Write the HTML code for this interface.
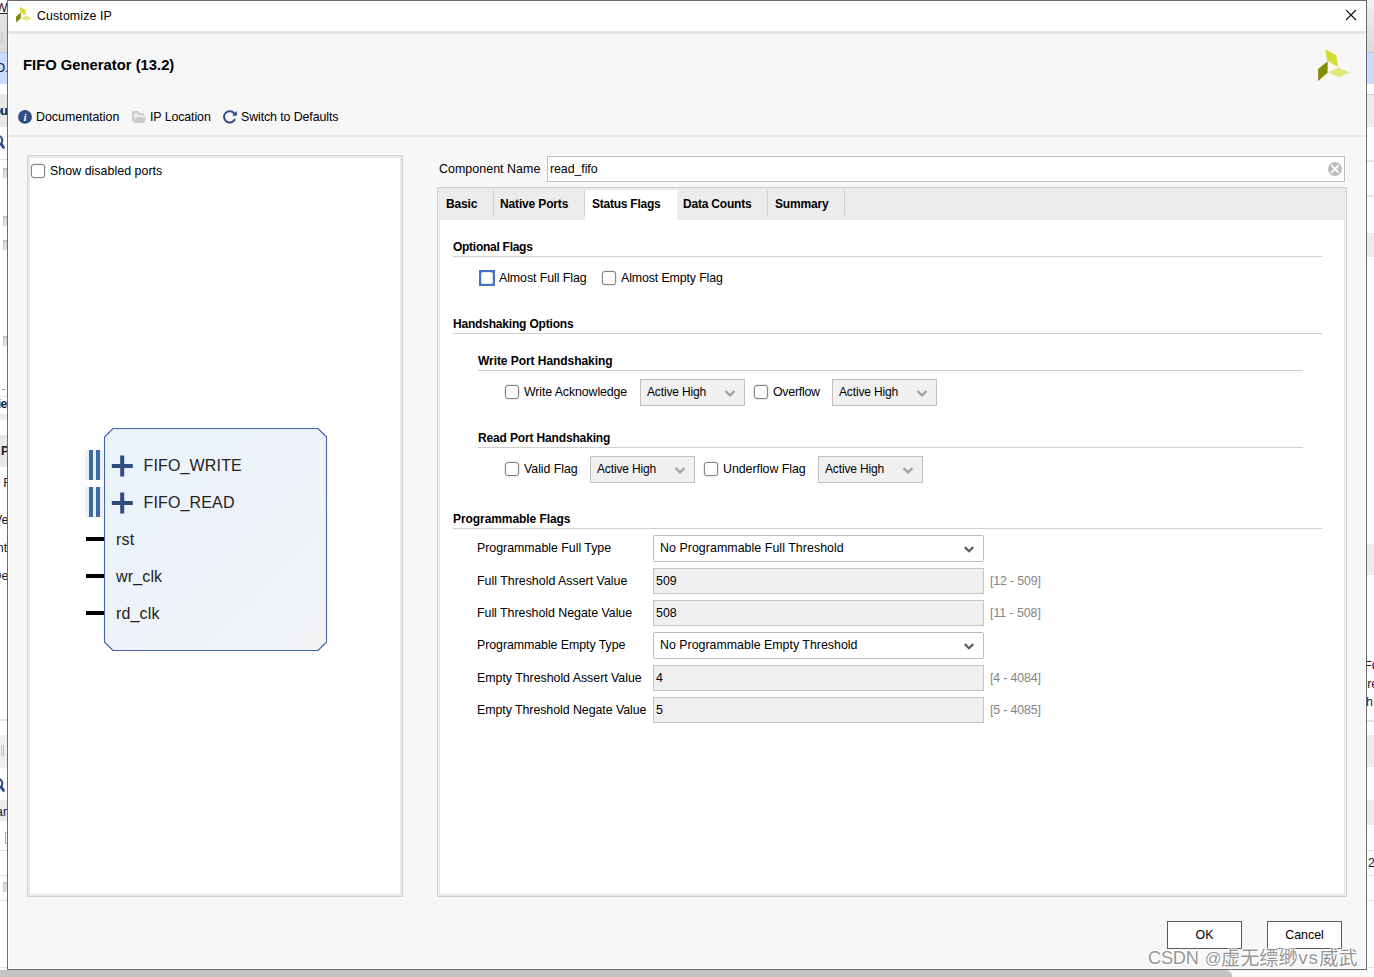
<!DOCTYPE html>
<html>
<head>
<meta charset="utf-8">
<title>Customize IP</title>
<style>
html,body{margin:0;padding:0;}
body{width:1374px;height:977px;position:relative;overflow:hidden;background:#fff;font-family:"Liberation Sans",sans-serif;font-size:12.4px;color:#000;}
.abs{position:absolute;}
.t{position:absolute;white-space:nowrap;line-height:16px;height:16px;}
.b{font-weight:700;font-size:12px;letter-spacing:-0.15px;}
#dlg{position:absolute;left:7px;top:0;width:1358px;height:968px;border:1px solid #6a6a6a;box-shadow:inset 0 0 0 1px #fff;background:#f7f7f7;box-sizing:content-box;}
.cb{position:absolute;width:12px;height:12px;border:1px solid #858585;border-radius:3px;background:#fff;box-shadow:0 0 0 0.5px rgba(133,133,133,.35);}
.cbf{position:absolute;width:16px;height:16px;background:#4472c8;}
.cbf i{position:absolute;left:2px;top:2px;width:12px;height:12px;border-radius:2.5px;background:#fff;box-shadow:inset 0 0 0 0.6px #d8d2cc;}
.hl{position:absolute;height:1px;background:#cfcfcf;}
.sel{position:absolute;height:25px;border:1px solid #c0c0c0;background:#f0f0f0;}
.selw{position:absolute;height:25px;border:1px solid #bcbcbc;border-radius:1.5px;background:#fff;}
.inp{position:absolute;height:24px;border:1px solid #c4c4c4;background:#efefef;}
.rng{color:#858585;}
.btn{position:absolute;height:26px;border:1px solid #5c5c5c;background:#fff;text-align:center;line-height:26px;}
</style>
</head>
<body>
<!-- background app strips -->
<div id="bgl" class="abs" style="left:0;top:0;width:7px;height:977px;background:#fff;overflow:hidden;font-size:12.4px;color:#1a1a2a;">
<div class="abs" style="left:0;top:14px;width:8px;height:39px;background:linear-gradient(#e2e2e2,#dadada);"></div><div class="abs" style="left:1px;top:33px;width:2px;height:10px;background:#cfcfcf;"></div><div class="abs" style="left:0;top:52px;width:8px;height:1px;background:#c6c6c6;"></div><div class="abs" style="left:0;top:53px;width:8px;height:31px;background:#c9dcff;"></div><div class="abs" style="left:0;top:94px;width:8px;height:33px;background:#e8e8e8;"></div><div class="abs" style="left:0;top:159px;width:8px;height:1px;background:#e4e4e4;"></div><div class="abs" style="left:0;top:396px;width:8px;height:1px;background:#e2e2e2;"></div><div class="abs" style="left:2px;top:389px;width:3px;height:1px;background:#999;"></div><div class="abs" style="left:0;top:414px;width:8px;height:6px;background:#eeeeee;"></div><div class="abs" style="left:0;top:435px;width:8px;height:32px;background:#e8e8e8;"></div><div class="abs" style="left:0;top:719px;width:8px;height:2px;background:#e8e8e8;"></div><div class="abs" style="left:0;top:735px;width:8px;height:33px;background:#efefef;"></div><div class="abs" style="left:0;top:800px;width:8px;height:21px;background:#ececec;"></div><div class="abs" style="left:0;top:850px;width:8px;height:1px;background:#e4e4e4;"></div><div class="abs" style="left:0;top:875px;width:8px;height:1px;background:#e4e4e4;"></div><div class="abs" style="left:0;top:900px;width:8px;height:1px;background:#e4e4e4;"></div>
<div class="abs" style="left:0;top:967px;width:8px;height:1px;background:#e6e6e6;"></div><div class="t" style="left:-4.2px;top:0px;color:#101030;">W</div><div class="abs" style="left:0;top:13px;width:8px;height:1px;background:#222;"></div><div class="t" style="left:-4.6px;top:60.4px;color:#151530;">O.</div><div class="t" style="left:-6.6px;top:102.6px;font-weight:700;letter-spacing:-0.8px;">ou</div><div class="t" style="left:-2.2px;top:396px;font-weight:700;letter-spacing:-0.8px;">ie</div><div class="t" style="left:1px;top:442.7px;font-weight:700;">P</div><div class="t" style="left:3.2px;top:474.6px;">F</div><div class="t" style="left:-6px;top:512px;">Ve</div><div class="t" style="left:-3.2px;top:540px;">nt</div><div class="t" style="left:-7.5px;top:568px;">De</div><div class="t" style="left:-4px;top:804px;">ar</div><svg class="abs" style="left:-10px;top:132px;" width="18" height="20" viewBox="0 0 18 20"><circle cx="7.7" cy="8.5" r="4.6" fill="none" stroke="#2e4c8c" stroke-width="2.1"/><path d="M11.1 12 L13.5 15.4" stroke="#2e4c8c" stroke-width="2.8" stroke-linecap="round"/></svg><svg class="abs" style="left:-10px;top:775px;" width="18" height="20" viewBox="0 0 18 20"><circle cx="7.7" cy="8.5" r="4.6" fill="none" stroke="#2e4c8c" stroke-width="2.1"/><path d="M11.1 12 L13.5 15.4" stroke="#2e4c8c" stroke-width="2.8" stroke-linecap="round"/></svg><div class="abs" style="left:3px;top:168px;width:6px;height:8px;background:#dedede;border-top:2px solid #c4c4c4;border-left:1px solid #c8c8c8;"></div><div class="abs" style="left:3px;top:216px;width:6px;height:8px;background:#dedede;border-top:2px solid #c4c4c4;border-left:1px solid #c8c8c8;"></div><div class="abs" style="left:3px;top:240px;width:6px;height:8px;background:#dedede;border-top:2px solid #c4c4c4;border-left:1px solid #c8c8c8;"></div><div class="abs" style="left:3px;top:336px;width:6px;height:8px;background:#dedede;border-top:2px solid #c4c4c4;border-left:1px solid #c8c8c8;"></div><div class="abs" style="left:3px;top:882px;width:6px;height:8px;background:#dedede;border-top:2px solid #c4c4c4;border-left:1px solid #c8c8c8;"></div><div class="abs" style="left:5px;top:832px;width:4px;height:10px;border:1px solid #aaa;"></div><div class="abs" style="left:1px;top:745px;width:1px;height:11px;background:#ecc79a;"></div><div class="abs" style="left:3px;top:745px;width:1px;height:11px;background:#a9bbd8;"></div>
</div>
<div id="bgr" class="abs" style="left:1367px;top:0;width:7px;height:977px;background:#fff;overflow:hidden;font-size:12.4px;color:#1a1a2a;">
<div class="abs" style="left:0;top:0;width:8px;height:53px;background:linear-gradient(#f0f0f0,#d9d9d9);"></div><div class="abs" style="left:0;top:52px;width:8px;height:1px;background:#c6c6c6;"></div><div class="abs" style="left:0;top:53px;width:8px;height:31px;background:#c9dcff;"></div><div class="abs" style="left:0;top:94px;width:8px;height:1px;background:#d0d0d0;"></div><div class="abs" style="left:0;top:95px;width:8px;height:32px;background:#ececec;"></div><div class="abs" style="left:0;top:160px;width:8px;height:2px;background:#e6e6e6;"></div><div class="abs" style="left:0;top:195px;width:8px;height:2px;background:#e6e6e6;"></div><div class="abs" style="left:0;top:233px;width:8px;height:24px;background:#ececec;"></div><div class="abs" style="left:0;top:544px;width:8px;height:31px;background:#ececec;"></div><div class="abs" style="left:0;top:720px;width:8px;height:2px;background:#e2e2e2;"></div><div class="abs" style="left:0;top:735px;width:8px;height:32px;background:#ececec;"></div><div class="abs" style="left:0;top:800px;width:8px;height:25px;background:#ececec;"></div><div class="abs" style="left:0;top:850px;width:8px;height:1px;background:#e0e0e0;"></div><div class="abs" style="left:0;top:875px;width:8px;height:1px;background:#e0e0e0;"></div><div class="abs" style="left:0;top:900px;width:8px;height:1px;background:#e0e0e0;"></div>
<div class="abs" style="left:0;top:967px;width:8px;height:1px;background:#e2e2e2;"></div><div class="t" style="left:-2.8px;top:658px;">FC</div><div class="t" style="left:-2.6px;top:676px;">ire</div><div class="t" style="left:-1.1px;top:694px;">h</div><div class="t" style="left:1px;top:855px;">2</div>
</div>
<div class="abs" style="left:0;top:970px;width:1374px;height:7px;background:#fafafa;"></div><div class="abs" style="left:-10px;top:970px;width:1242px;height:12px;border-radius:6px;background:#c3c3c3;"></div>
<div id="dlg"></div>

<!-- title bar -->
<div class="abs" style="left:8px;top:1px;width:1358px;height:30px;background:#fff;"></div>
<div class="abs" style="left:8px;top:31px;width:1358px;height:3px;background:#e6e6e6;"></div>
<svg class="abs" style="left:13.6px;top:5.4px;" width="19" height="19" viewBox="0 0 38 38">
  <polygon points="11.5,3.2 22.5,9.4 24.0,20.9 13.0,14.5" fill="#d2dd35"/>
  <polygon points="4.1,22.9 13.6,15.2 13.6,26.8 4.1,35.0" fill="#858a08"/>
  <polygon points="14.1,26.3 24.8,21.6 35.6,26.5 24.8,31.6" fill="#e1e97a"/>
</svg>
<div class="t" style="left:37px;top:8px;font-size:12.4px;color:#000;letter-spacing:0.1px;">Customize IP</div>
<svg class="abs" style="left:1344px;top:8px;" width="14" height="14" viewBox="0 0 14 14"><path d="M2 2 L12 12 M12 2 L2 12" stroke="#111" stroke-width="1.1" fill="none"/></svg>

<!-- header -->
<div class="t" style="left:23px;top:56px;font-weight:700;font-size:14.8px;line-height:18px;height:18px;color:#000;">FIFO Generator (13.2)</div>
<svg class="abs" style="left:1314px;top:46px;" width="38" height="38" viewBox="0 0 38 38">
  <polygon points="11.5,3.2 22.5,9.4 24.0,20.9 13.0,14.5" fill="#d2dd35"/>
  <polygon points="4.1,22.9 13.6,15.2 13.6,26.8 4.1,35.0" fill="#858a08"/>
  <polygon points="14.1,26.3 24.8,21.6 35.6,26.5 24.8,31.6" fill="#e1e97a"/>
</svg>

<!-- toolbar -->
<svg class="abs" style="left:17px;top:110px;" width="16" height="14" viewBox="0 0 16 14">
  <circle cx="8" cy="6.9" r="6.95" fill="#314e87"/>
  <text x="8.1" y="11.4" font-family="Liberation Serif, serif" font-size="11" font-weight="700" font-style="italic" fill="#fff" text-anchor="middle">i</text>
</svg>
<div class="t" style="left:36px;top:109px;">Documentation</div>
<svg class="abs" style="left:131px;top:110px;" width="16" height="14" viewBox="0 0 16 14">
  <path d="M2 11.6 V3.1 Q2 2.05 3.1 2.05 H6.4 Q7.2 2.05 7.4 3 L7.6 4 H11.4 Q12.3 4 12.3 4.9 V5.9" stroke="#cbcbcb" stroke-width="2" fill="#ededed" stroke-linejoin="round"/>
  <polygon points="4.3,7.2 15,7.2 13.4,12.9 3,12.9" fill="#cacaca"/>
</svg>
<div class="t" style="left:150px;top:109px;letter-spacing:-0.1px;">IP Location</div>
<svg class="abs" style="left:221px;top:109px;" width="18" height="16" viewBox="0 0 18 16">
  <path d="M13.4 4.6 A5.7 5.7 0 1 0 14.0 10.0" fill="none" stroke="#2f4d88" stroke-width="2"/>
  <polygon points="15.9,2.0 15.9,6.7 11.0,6.6" fill="#2f4d88"/>
</svg>
<div class="t" style="left:241px;top:109px;letter-spacing:-0.1px;">Switch to Defaults</div>
<div class="abs" style="left:8px;top:135px;width:1358px;height:2px;background:#e9e9e9;"></div>

<!-- left panel -->
<div class="abs" style="left:27px;top:155px;width:374px;height:740px;border:1px solid #d2d2d2;background:#e9e9e9;"></div>
<div class="abs" style="left:30px;top:158px;width:370px;height:736px;background:#fff;"></div>
<div class="cb" style="left:31px;top:164px;"></div>
<div class="t" style="left:50px;top:163px;letter-spacing:0.04px;">Show disabled ports</div>

<!-- block symbol -->
<svg class="abs" style="left:80px;top:420px;" width="260" height="240" viewBox="0 0 260 240">
  <defs><linearGradient id="bg1" x1="0" y1="0" x2="1" y2="1"><stop offset="0" stop-color="#eaf2fc"/><stop offset="0.85" stop-color="#f1f4f8"/><stop offset="1" stop-color="#f5f5f6"/></linearGradient></defs>
  <path d="M33 8.5 H238 L246.5 17 V222 L238 230.5 H33 L24.5 222 V17 Z" fill="url(#bg1)" stroke="#4566ae" stroke-width="1.1" stroke-linejoin="round"/>
  <rect x="5" y="30" width="18" height="30" fill="#eaf1fb"/>
  <rect x="9" y="30" width="4" height="30" fill="#3d6a9e"/>
  <rect x="16" y="30" width="4" height="30" fill="#3d6a9e"/>
  <rect x="5" y="67" width="18" height="30" fill="#eaf1fb"/>
  <rect x="9" y="67" width="4" height="30" fill="#3d6a9e"/>
  <rect x="16" y="67" width="4" height="30" fill="#3d6a9e"/>
  <path d="M31.8 46 h21 M42.2 35.5 v21" stroke="#2f4b80" stroke-width="4" fill="none"/>
  <path d="M31.8 83 h21 M42.2 72.5 v21" stroke="#2f4b80" stroke-width="4" fill="none"/>
  <rect x="6" y="117" width="18" height="4" fill="#000"/>
  <rect x="6" y="154" width="18" height="4" fill="#000"/>
  <rect x="6" y="191" width="18" height="4" fill="#000"/>
  <g font-family="Liberation Sans, sans-serif" font-size="16" letter-spacing="0.15" fill="#222">
    <text x="63.5" y="51">FIFO_WRITE</text>
    <text x="63.5" y="88">FIFO_READ</text>
    <text x="36" y="125">rst</text>
    <text x="36" y="162">wr_clk</text>
    <text x="36" y="199">rd_clk</text>
  </g>
</svg>

<!-- component name -->
<div class="t" style="left:439px;top:161px;letter-spacing:0.06px;">Component Name</div>
<div class="abs" style="left:547px;top:156px;width:796px;height:24px;border:1px solid #bdbdbd;background:#fff;box-shadow:0 0 0 1px #fdfdfd;"></div>
<div class="t" style="left:550px;top:161px;letter-spacing:-0.08px;">read_fifo</div>
<svg class="abs" style="left:1327px;top:161px;" width="16" height="16" viewBox="0 0 16 16"><circle cx="8" cy="8" r="7" fill="#bdbdbd"/><path d="M4.2 4.2 L11.8 11.8 M11.8 4.2 L4.2 11.8" stroke="#fff" stroke-width="1.8" fill="none"/></svg>

<!-- tab panel -->
<div class="abs" style="left:437px;top:187px;width:908px;height:708px;border:1px solid #cfcfcf;background:#e9e9e9;"></div>
<div class="abs" style="left:440px;top:190px;width:904px;height:704px;background:#fff;"></div>
<div class="abs" style="left:440px;top:190px;width:904px;height:30px;background:#ececec;"></div>
<div class="abs" style="left:585px;top:190px;width:92px;height:30px;background:#fff;"></div>
<div class="abs" style="left:493px;top:190px;width:1px;height:25px;background:#cfcfcf;"></div>
<div class="abs" style="left:584px;top:190px;width:1px;height:25px;background:#cfcfcf;"></div>
<div class="abs" style="left:767px;top:190px;width:1px;height:25px;background:#cfcfcf;"></div>
<div class="abs" style="left:844px;top:190px;width:1px;height:25px;background:#cfcfcf;"></div>
<div class="t b" style="left:446px;top:196px;">Basic</div>
<div class="t b" style="left:500px;top:196px;">Native Ports</div>
<div class="t b" style="left:592px;top:196px;letter-spacing:-0.24px;">Status Flags</div>
<div class="t b" style="left:683px;top:196px;letter-spacing:-0.2px;">Data Counts</div>
<div class="t b" style="left:775px;top:196px;">Summary</div>

<!-- optional flags -->
<div class="t b" style="left:453px;top:239px;letter-spacing:-0.27px;">Optional Flags</div>
<div class="hl" style="left:453px;top:256px;width:869px;"></div>
<div class="cbf" style="left:479px;top:270px;"><i></i></div>
<div class="t" style="left:499px;top:270px;letter-spacing:-0.08px;">Almost Full Flag</div>
<div class="cb" style="left:602px;top:271px;"></div>
<div class="t" style="left:621px;top:270px;letter-spacing:-0.13px;">Almost Empty Flag</div>

<!-- handshaking -->
<div class="t b" style="left:453px;top:316px;letter-spacing:-0.19px;">Handshaking Options</div>
<div class="hl" style="left:453px;top:333px;width:869px;"></div>
<div class="t b" style="left:478px;top:353px;letter-spacing:-0.06px;">Write Port Handshaking</div>
<div class="hl" style="left:478px;top:370px;width:825px;"></div>
<div class="cb" style="left:505px;top:385px;"></div>
<div class="t" style="left:524px;top:384px;letter-spacing:-0.12px;">Write Acknowledge</div>
<div class="sel" style="left:640px;top:379px;width:103px;"></div><div class="t" style="left:647px;top:384px;font-size:12px;letter-spacing:-0.15px;">Active High</div><svg class="abs" style="left:724px;top:389px;" width="13" height="8" viewBox="0 0 13 8"><path d="M1.5 2 L6 6.3 L10.5 2" fill="none" stroke="#a2a2a2" stroke-width="2.4"/></svg>
<div class="cb" style="left:754px;top:385px;"></div>
<div class="t" style="left:773px;top:384px;letter-spacing:-0.27px;">Overflow</div>
<div class="sel" style="left:832px;top:379px;width:103px;"></div><div class="t" style="left:839px;top:384px;font-size:12px;letter-spacing:-0.15px;">Active High</div><svg class="abs" style="left:916px;top:389px;" width="13" height="8" viewBox="0 0 13 8"><path d="M1.5 2 L6 6.3 L10.5 2" fill="none" stroke="#a2a2a2" stroke-width="2.4"/></svg>

<div class="t b" style="left:478px;top:430px;">Read Port Handshaking</div>
<div class="hl" style="left:478px;top:447px;width:825px;"></div>
<div class="cb" style="left:505px;top:462px;"></div>
<div class="t" style="left:524px;top:461px;letter-spacing:-0.05px;">Valid Flag</div>
<div class="sel" style="left:590px;top:456px;width:103px;"></div><div class="t" style="left:597px;top:461px;font-size:12px;letter-spacing:-0.15px;">Active High</div><svg class="abs" style="left:674px;top:466px;" width="13" height="8" viewBox="0 0 13 8"><path d="M1.5 2 L6 6.3 L10.5 2" fill="none" stroke="#a2a2a2" stroke-width="2.4"/></svg>
<div class="cb" style="left:704px;top:462px;"></div>
<div class="t" style="left:723px;top:461px;letter-spacing:-0.05px;">Underflow Flag</div>
<div class="sel" style="left:818px;top:456px;width:103px;"></div><div class="t" style="left:825px;top:461px;font-size:12px;letter-spacing:-0.15px;">Active High</div><svg class="abs" style="left:902px;top:466px;" width="13" height="8" viewBox="0 0 13 8"><path d="M1.5 2 L6 6.3 L10.5 2" fill="none" stroke="#a2a2a2" stroke-width="2.4"/></svg>

<!-- programmable flags -->
<div class="t b" style="left:453px;top:511px;letter-spacing:-0.07px;">Programmable Flags</div>
<div class="hl" style="left:453px;top:528px;width:869px;"></div>
<div class="t" style="left:477px;top:540px;letter-spacing:-0.03px;">Programmable Full Type</div>
<div class="selw" style="left:653px;top:535px;width:329px;"></div><div class="t" style="left:660px;top:540px;letter-spacing:0.05px;">No Programmable Full Threshold</div><svg class="abs" style="left:963px;top:545px;" width="12" height="8" viewBox="0 0 12 8"><path d="M1.8 2.1 L6 6.3 L10.2 2.1" fill="none" stroke="#5e5e5e" stroke-width="2.2"/></svg>
<div class="t" style="left:477px;top:573px;">Full Threshold Assert Value</div>
<div class="inp" style="left:653px;top:568px;width:329px;"></div><div class="t" style="left:656px;top:573px;">509</div><div class="t rng" style="left:990px;top:573px;letter-spacing:-0.16px;">[12 - 509]</div>
<div class="t" style="left:477px;top:605px;letter-spacing:-0.03px;">Full Threshold Negate Value</div>
<div class="inp" style="left:653px;top:600px;width:329px;"></div><div class="t" style="left:656px;top:605px;">508</div><div class="t rng" style="left:990px;top:605px;letter-spacing:-0.06px;">[11 - 508]</div>
<div class="t" style="left:477px;top:637px;letter-spacing:-0.07px;">Programmable Empty Type</div>
<div class="selw" style="left:653px;top:632px;width:329px;"></div><div class="t" style="left:660px;top:637px;">No Programmable Empty Threshold</div><svg class="abs" style="left:963px;top:642px;" width="12" height="8" viewBox="0 0 12 8"><path d="M1.8 2.1 L6 6.3 L10.2 2.1" fill="none" stroke="#5e5e5e" stroke-width="2.2"/></svg>
<div class="t" style="left:477px;top:670px;letter-spacing:-0.03px;">Empty Threshold Assert Value</div>
<div class="inp" style="left:653px;top:665px;width:329px;"></div><div class="t" style="left:656px;top:670px;">4</div><div class="t rng" style="left:990px;top:670px;letter-spacing:-0.16px;">[4 - 4084]</div>
<div class="t" style="left:477px;top:702px;letter-spacing:-0.06px;">Empty Threshold Negate Value</div>
<div class="inp" style="left:653px;top:697px;width:329px;"></div><div class="t" style="left:656px;top:702px;">5</div><div class="t rng" style="left:990px;top:702px;letter-spacing:-0.16px;">[5 - 4085]</div>

<!-- buttons -->
<div class="btn" style="left:1167px;top:921px;width:73px;">OK</div>
<div class="btn" style="left:1267px;top:921px;width:73px;">Cancel</div>

<!-- watermark -->
<div id="wm" class="t" style="left:1148px;top:945.3px;height:26px;line-height:26px;font-size:18.2px;font-family:'Liberation Sans','Noto Sans CJK SC',sans-serif;color:rgba(122,122,122,0.8);text-shadow:-1px -1px 0 rgba(255,255,255,.8),1px -1px 0 rgba(255,255,255,.8),-1px 1px 0 rgba(255,255,255,.8),1px 1px 0 rgba(255,255,255,.8);"><span style="letter-spacing:-0.2px;">CSDN</span> <span style="font-size:16.6px;letter-spacing:-0.6px;margin-left:1px;">@</span><span style="font-size:19.15px;position:relative;top:0.6px;">虚无缥缈</span><span style="font-size:19px;letter-spacing:0.9px;margin-left:0.5px;">vs</span><span style="font-size:19.15px;position:relative;top:0.6px;margin-left:0.4px;">威武</span></div>

</body>
</html>
